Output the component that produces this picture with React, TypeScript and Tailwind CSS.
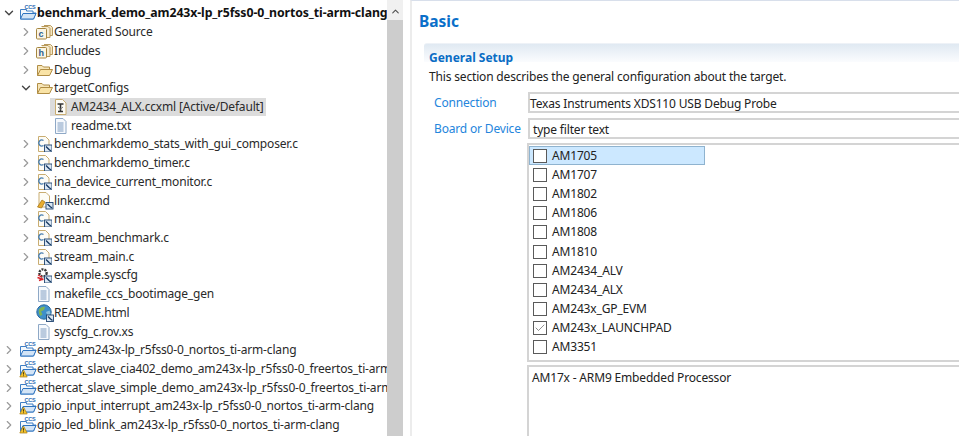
import { ChevronRight, ChevronDown, ChevronUp, Check } from "lucide-react";

type IconKind = "project" | "projectWarn" | "srcC" | "srcH" | "folder" | "cfile" | "linker" | "ccxml" | "txt" | "syscfg" | "html";

type Row = {
  label: string;
  depth: number;
  icon: IconKind;
  arrow?: "right" | "down";
  bold?: boolean;
  selected?: boolean;
};

const ROWS: Row[] = [
  { label: "benchmark_demo_am243x-lp_r5fss0-0_nortos_ti-arm-clang", depth: 0, icon: "project", arrow: "down", bold: true },
  { label: "Generated Source", depth: 1, icon: "srcC", arrow: "right" },
  { label: "Includes", depth: 1, icon: "srcH", arrow: "right" },
  { label: "Debug", depth: 1, icon: "folder", arrow: "right" },
  { label: "targetConfigs", depth: 1, icon: "folder", arrow: "down" },
  { label: "AM2434_ALX.ccxml [Active/Default]", depth: 2, icon: "ccxml", selected: true },
  { label: "readme.txt", depth: 2, icon: "txt" },
  { label: "benchmarkdemo_stats_with_gui_composer.c", depth: 1, icon: "cfile", arrow: "right" },
  { label: "benchmarkdemo_timer.c", depth: 1, icon: "cfile", arrow: "right" },
  { label: "ina_device_current_monitor.c", depth: 1, icon: "cfile", arrow: "right" },
  { label: "linker.cmd", depth: 1, icon: "linker", arrow: "right" },
  { label: "main.c", depth: 1, icon: "cfile", arrow: "right" },
  { label: "stream_benchmark.c", depth: 1, icon: "cfile", arrow: "right" },
  { label: "stream_main.c", depth: 1, icon: "cfile", arrow: "right" },
  { label: "example.syscfg", depth: 1, icon: "syscfg" },
  { label: "makefile_ccs_bootimage_gen", depth: 1, icon: "txt" },
  { label: "README.html", depth: 1, icon: "html" },
  { label: "syscfg_c.rov.xs", depth: 1, icon: "txt" },
  { label: "empty_am243x-lp_r5fss0-0_nortos_ti-arm-clang", depth: 0, icon: "project", arrow: "right" },
  { label: "ethercat_slave_cia402_demo_am243x-lp_r5fss0-0_freertos_ti-arm-clang", depth: 0, icon: "projectWarn", arrow: "right" },
  { label: "ethercat_slave_simple_demo_am243x-lp_r5fss0-0_freertos_ti-arm-clang", depth: 0, icon: "project", arrow: "right" },
  { label: "gpio_input_interrupt_am243x-lp_r5fss0-0_nortos_ti-arm-clang", depth: 0, icon: "projectWarn", arrow: "right" },
  { label: "gpio_led_blink_am243x-lp_r5fss0-0_nortos_ti-arm-clang", depth: 0, icon: "projectWarn", arrow: "right" },
  // next project, only the top of its icon shows at the window edge
  { label: "", depth: 0, icon: "project" },
];

const DEVICES = [
  "AM1705",
  "AM1707",
  "AM1802",
  "AM1806",
  "AM1808",
  "AM1810",
  "AM2434_ALV",
  "AM2434_ALX",
  "AM243x_GP_EVM",
  "AM243x_LAUNCHPAD",
  "AM3351",
  "",
];

// small magnifier badge used on the indexed source files
function Lens() {
  return (
    <>
      <rect x="8.5" y="9" width="7.5" height="7" fill="#dbe7f3" stroke="#1f4470" strokeWidth="0.9" />
      <path d="M10 10.5l3 3M13 13.5l2 1.500" stroke="#163a63" strokeWidth="1.4" fill="none" />
    </>
  );
}

function PageShape({ stroke = "#c9ad72" }: { stroke?: string }) {
  return <path d="M2.5 .5h7l3.5 3.5v11.5h-10.5z" fill="#fdfcf6" stroke={stroke} />;
}

function TreeIcon({ kind }: { kind: IconKind }) {
  if (kind === "project" || kind === "projectWarn") {
    return (
      <svg width="18" height="18" viewBox="0 0 18 18" className="shrink-0">
        <path d="M1.5 5.5v9.5h13l2.5-6h-3v-2h-6.5v-1.5z" fill="#f5f8fc" stroke="#3f7fc4" />
        <path d="M1.5 15l2.500-5.500h13l-2.500 5.500z" fill="#d3e4f6" stroke="#2f74c0" />
        <text x="5.5" y="5" fontSize="5.5" fontWeight="700" fill="#2c6cb4" fontFamily="Liberation Sans, sans-serif">CCS</text>
        {kind === "projectWarn" && (
          <>
            <path d="M4.5 10l3.700 7h-7.400z" fill="#f4c430" stroke="#a67c12" strokeWidth="0.7" />
            <path d="M4.5 12.200v2.400M4.500 15.400v.8" stroke="#3a2c05" strokeWidth="0.9" />
          </>
        )}
      </svg>
    );
  }
  if (kind === "srcC" || kind === "srcH") {
    return (
      <svg width="18" height="18" viewBox="0 0 18 18" className="shrink-0">
        <path d="M8 2.500h6.500l2 2v8h-3" fill="#f4e6c4" stroke="#b99a5c" />
        <path d="M5.500 3.500h6.500l2 2v9h-3" fill="#f7ecd0" stroke="#b99a5c" />
        <rect x=".5" y="5.500" width="10" height="10.500" rx="1" fill="#fbf5e4" stroke="#a5853f" />
        <text x="2.600" y="14" fontSize="9" fontWeight="700" fill="#2a5d92" fontFamily="Liberation Sans, sans-serif">{kind === "srcC" ? "c" : "h"}</text>
      </svg>
    );
  }
  if (kind === "folder") {
    return (
      <svg width="18" height="18" viewBox="0 0 18 18" className="shrink-0">
        <path d="M1.500 14.500v-10h4.500l1.500 1.500h6v2" fill="#f6e5b8" stroke="#b08d45" />
        <path d="M1.500 14.500l3-6h12l-3 6z" fill="#f9e3a6" stroke="#b08d45" />
      </svg>
    );
  }
  if (kind === "cfile") {
    return (
      <svg width="16" height="16" viewBox="0 0 16 16" className="shrink-0">
        <PageShape />
        <path d="M7.500 4.500a3 3 0 1 0 0 5" fill="none" stroke="#4a7fb0" strokeWidth="1.300" />
        <Lens />
      </svg>
    );
  }
  if (kind === "linker") {
    return (
      <svg width="18" height="18" viewBox="0 0 18 18" className="shrink-0">
        <path d="M3 .5h7l3.500 3.500v11h-10.500z" fill="#fdfcf6" stroke="#c9ad72" />
        <path d="M1.500 15l4.500-7 3 2-3.500 6z" fill="#e9ad2e" stroke="#a8791a" strokeWidth="0.8" />
        <rect x="10" y="10.500" width="7" height="6.500" fill="#dbe7f3" stroke="#1f4470" strokeWidth="0.9" />
        <path d="M11.500 12l2.500 2.500M14 14.500l2 1.500" stroke="#163a63" strokeWidth="1.400" fill="none" />
      </svg>
    );
  }
  if (kind === "ccxml") {
    return (
      <svg width="16" height="16" viewBox="0 0 16 16" className="shrink-0">
        <PageShape />
        <path d="M4.500 5h6M7.500 5v7M5 12.500h5" stroke="#333333" strokeWidth="1.600" fill="none" />
        <path d="M5 8l2.500 2 2.500-2" stroke="#777777" fill="none" />
      </svg>
    );
  }
  if (kind === "txt") {
    return (
      <svg width="16" height="16" viewBox="0 0 16 16" className="shrink-0">
        <path d="M2.500 .5h7.500l3 3v12h-10.500z" fill="#f6f9fd" stroke="#8ea8c6" />
        <path d="M4.500 5h6M4.500 7h6M4.500 9h6M4.500 11h6M4.500 13h6" stroke="#7f9cc0" />
      </svg>
    );
  }
  if (kind === "syscfg") {
    return (
      <svg width="16" height="16" viewBox="0 0 16 16" className="shrink-0">
        <circle cx="7" cy="6" r="3.600" fill="none" stroke="#3a3a3a" strokeWidth="2.400" strokeDasharray="2 1" />
        <path d="M1.500 10.500l6 2M3 13.500l4-1.500" stroke="#d8232a" strokeWidth="1.600" fill="none" />
        <path d="M2 8l4 2" stroke="#d8232a" strokeWidth="1.200" fill="none" />
        <Lens />
      </svg>
    );
  }
  return (
    <svg width="18" height="18" viewBox="0 0 18 18" className="shrink-0">
      <circle cx="8" cy="8" r="7.200" fill="#3f8fc9" stroke="#2a6a9e" />
      <path d="M3 5.500c2-2.500 4.500-3 6-2.500l-1 3-3 1.500 1.500 3-2 1.500c-1.500-1.500-2-4-1.500-6.500z" fill="#7fb455" />
      <path d="M10 8l3.500-1.500 1 3-2.500 3z" fill="#8cc0dc" />
      <rect x="10.500" y="11" width="7" height="6.500" fill="#dbe7f3" stroke="#1f4470" strokeWidth="0.9" />
      <path d="M12 12.500l2.500 2.500M14.500 15l2 1.500" stroke="#163a63" strokeWidth="1.400" fill="none" />
    </svg>
  );
}

function TreeRow({ row }: { row: Row }) {
  return (
    <div className="flex h-[18.72px] items-center whitespace-nowrap" style={{ paddingLeft: row.depth * 17 }}>
      <span className="flex w-[16px] shrink-0 justify-center pl-[2px]">
        {row.arrow === "right" && <ChevronRight size={14} strokeWidth={2} className="text-[#9a9a9a]" />}
        {row.arrow === "down" && <ChevronDown size={14} strokeWidth={2.4} className="text-[#444444]" />}
      </span>
      <span className={`flex h-full items-center pl-[3px] pr-[2px] ${row.selected ? "bg-[#dcdcdc]" : ""}`}>
        <span className="flex w-[18px] shrink-0">
          <TreeIcon kind={row.icon} />
        </span>
        <span className={row.bold ? "text-[12.300px] font-bold tracking-[-0.1px] text-[#111111]" : "text-[#2a2a2a]"}>{row.label}</span>
      </span>
    </div>
  );
}

function DeviceRow({ name }: { name: string }) {
  const checked = name === "AM243x_LAUNCHPAD";
  const active = name === "AM1705";
  return (
    <div
      className={`flex h-[19.2px] w-[176px] shrink-0 items-center whitespace-nowrap ${
        active ? "border border-[#8fb3cf] bg-[#cce8ff] pl-[3px]" : "pl-[4px]"
      }`}
    >
      <span className="flex h-[14px] w-[14px] shrink-0 items-center justify-center border border-[#5a5a5a] bg-white">
        {checked && <Check size={12} strokeWidth={1.2} className="text-[#444444]" />}
      </span>
      <span className="ml-[5px] text-[#222222]">{name}</span>
    </div>
  );
}

export default function App() {
  return (
    <div className="flex h-[436px] w-[959px] overflow-hidden bg-white font-['Noto_Sans','Open_Sans',sans-serif] text-[12px] tracking-[-0.17px]">
      {/* project explorer */}
      <div className="w-[387px] shrink-0 overflow-hidden pt-[4px]">
        {ROWS.map((row) => (
          <TreeRow key={row.label || "next"} row={row} />
        ))}
      </div>

      <div className="flex w-[16px] shrink-0 flex-col bg-[#f0f0f0] pt-[3px]">
        <div className="flex h-[17px] items-center justify-center">
          <ChevronUp size={11} strokeWidth={2.4} className="text-[#505050]" />
        </div>
        <div className="flex-1 bg-[#cdcdcd]" />
      </div>

      {/* target config editor */}
      <div className="ml-[7px] min-w-0 flex-1 overflow-hidden border-l-2 border-t border-l-[#ececec] border-t-[#d8dfeb]">
        <h1 className="ml-[7px] mt-[10px] text-[15.500px] font-bold leading-[20px] tracking-normal text-[#0a6fc9]">Basic</h1>

        <div className="ml-[12px] mt-[12px]">
          <div className="flex h-[19px] items-center rounded-tl-[3px] border-t border-[#eef2f7] bg-gradient-to-b from-[#e0e9f2] to-[#fbfcfe] pl-[5px] pt-[9px] text-[12px] font-bold tracking-normal text-[#0a6cc4]">
            General Setup
          </div>
          <p className="mt-[6px] pl-[5px] leading-[17px] text-[#222222]">This section describes the general configuration about the target.</p>

          <div className="mt-[7px] flex items-center">
            <span className="w-[104px] shrink-0 pl-[10px] pt-[1px] text-[#2485dc]">Connection</span>
            <div className="h-[21px] flex-1 border-y-2 border-l-2 border-[#d4d4d4] leading-[20px] text-[#222222]">
              Texas Instruments XDS110 USB Debug Probe
            </div>
          </div>
          <div className="mt-[5px] flex items-center">
            <span className="w-[104px] shrink-0 whitespace-nowrap pl-[10px] pt-[1px] text-[#2485dc]">Board or Device</span>
            <div className="h-[21px] flex-1 border-y-2 border-l-2 border-[#d4d4d4] pl-[3px] leading-[19px] text-[#222222]">
              type filter text
            </div>
          </div>

          <div className="ml-[103px] mt-[4px] flex h-[219px] flex-col overflow-hidden border-y-2 border-l-2 border-[#d4d4d4] pt-[1px]">
            {DEVICES.map((name) => (
              <DeviceRow key={name || "clipped"} name={name} />
            ))}
          </div>

          <div className="ml-[103px] mt-[3px] h-[80px] border-l-2 border-t-2 border-[#d4d4d4] pl-[3px] pt-[2px] leading-[18px] text-[#222222]">
            AM17x - ARM9 Embedded Processor
          </div>
        </div>
      </div>
    </div>
  );
}
